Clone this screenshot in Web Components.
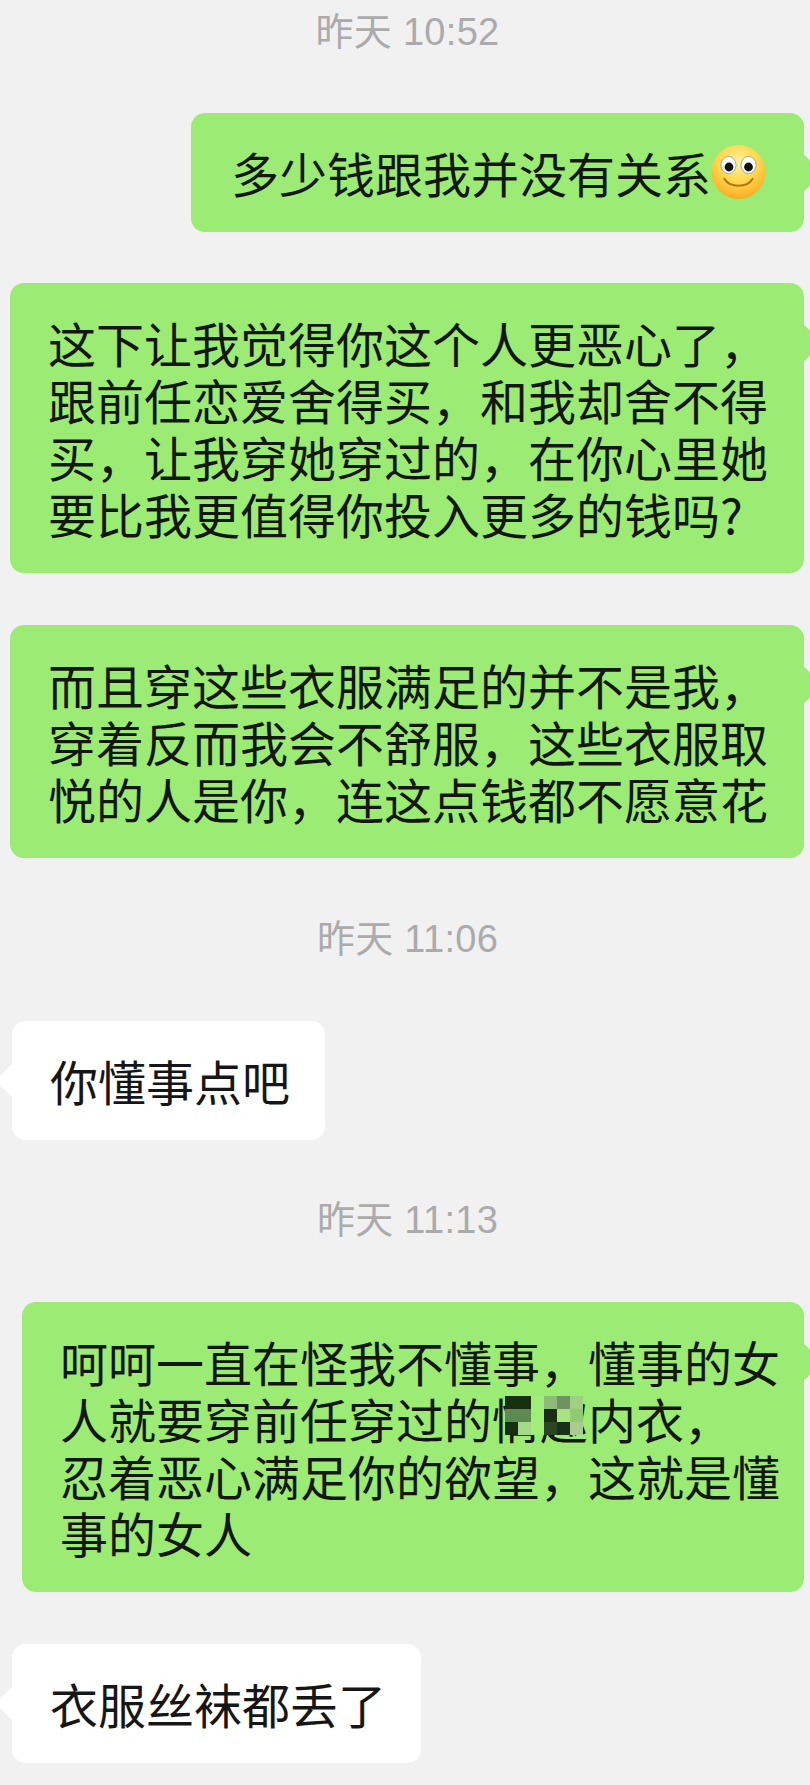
<!DOCTYPE html>
<html lang="zh-CN">
<head>
<meta charset="utf-8">
<title>聊天记录</title>
<style>
html,body{margin:0;padding:0;height:1785px;overflow:hidden;background:#f0f0f0}
body{font-family:"Noto Sans CJK SC",sans-serif;color:#14170f}
</style>
</head>
<body>
<template id="t-thread">
<style>
:host{display:flex;flex-direction:column;width:810px;height:1785px;overflow:hidden;background:#f1f1f1;box-sizing:border-box;padding-top:4px}
</style>
<slot></slot>
</template>
<template id="t-time">
<style>
:host{display:block;height:56px;line-height:56px;margin-top:var(--mt,0);padding-left:5px;text-align:center;color:#ababab;font:400 38px/56px "Liberation Sans","Noto Sans CJK SC",sans-serif;letter-spacing:.3px}
</style>
<slot></slot>
</template>
<template id="t-bubble">
<style>
:host{display:block;position:relative;box-sizing:border-box;align-self:flex-start;margin-top:var(--mt,52px);margin-left:var(--ml,10px);
 padding:31px var(--pr,36px) 31px var(--pl,38px);border-radius:14px;font:400 48px/57px "Noto Sans CJK SC",sans-serif;color:#14170f;background:#9ceb74}
:host([from="them"]){background:#fff;color:#161616;margin-left:12px;padding-right:35px}
:host([from="me"]){width:var(--w,auto)}
.tail{position:absolute;top:47px;width:26px;height:26px;background:inherit;transform:rotate(45deg);border-radius:2px}
:host([from="me"]) .tail{right:-13px}
:host([from="them"]) .tail{left:-12px;width:23px;height:23px;top:48px}
.txt{position:relative;display:block}
</style>
<span class="tail"></span>
<span class="txt"><slot></slot></span>
</template>
<template id="t-emoji">
<style>
:host{display:inline-block;width:55px;height:57px;vertical-align:top}
svg{display:block;width:55px;height:57px}
</style>
<svg viewBox="0 0 55 57" aria-hidden="true">
<defs>
<radialGradient id="f" cx="50%" cy="32%" r="72%">
<stop offset="0" stop-color="#fff2a0"/><stop offset=".5" stop-color="#ffd84e"/><stop offset=".88" stop-color="#fbb22a"/><stop offset="1" stop-color="#ee9a1d"/>
</radialGradient>
</defs>
<ellipse cx="27.5" cy="28" rx="27" ry="27" fill="url(#f)"/>
<ellipse cx="17.5" cy="21" rx="7.6" ry="8.6" fill="#fff" stroke="#a9a49a" stroke-width="1"/>
<ellipse cx="37.5" cy="21" rx="7.6" ry="8.6" fill="#fff" stroke="#a9a49a" stroke-width="1"/>
<circle cx="18" cy="23" r="4.4" fill="#111"/>
<circle cx="37.5" cy="23" r="4.4" fill="#111"/>
<path d="M13.5 35C19 44 36 44 41.5 35" fill="none" stroke="#b2750f" stroke-width="2.2" stroke-linecap="round"/>
</svg>
</template>
<template id="t-mosaic">
<style>
:host{display:inline-block;position:relative;white-space:nowrap}
.m{position:absolute;left:13px;top:6px;width:78px;height:39px;display:grid;grid-template-columns:repeat(6,13px);grid-template-rows:repeat(3,13px)}
.foot{position:absolute;left:48px;top:46px;width:42px;height:4px;background:#1a2b12;border-radius:2px;filter:blur(1px)}
i{display:block}
</style>
<slot></slot>
<div class="m" aria-hidden="true">
<i style="background:#16300f"></i><i style="background:#16300f"></i><i style="background:#9eee78"></i><i style="background:#8fbb7a"></i><i style="background:#6f925f"></i><i style="background:#a0cf82"></i>
<i style="background:#5d8a50"></i><i style="background:#5d8a50"></i><i style="background:#9eee78"></i><i style="background:#1b2d14"></i><i style="background:#a9e281"></i><i style="background:#8fc970"></i>
<i style="background:#16300f"></i><i style="background:#a5d98a"></i><i style="background:#9eee78"></i><i style="background:#2b4522"></i><i style="background:#16301a"></i><i style="background:#aacb90"></i>
</div>
</template>

<chat-thread>
  <chat-time>昨天 10:52</chat-time>
  <chat-bubble from="me" style="--mt:53px;--ml:191px;--pl:40px;--pr:38px">多少钱跟我并没有关系<smile-emoji></smile-emoji></chat-bubble>
  <chat-bubble from="me" style="--mt:51px;--w:794px">这下让我觉得你这个人更恶心了，跟前任恋爱舍得买，和我却舍不得买，让我穿她穿过的，在你心里她要比我更值得你投入更多的钱吗?</chat-bubble>
  <chat-bubble from="me" style="--w:794px">而且穿这些衣服满足的并不是我，穿着反而我会不舒服，这些衣服取悦的人是你，连这点钱都不愿意花</chat-bubble>
  <chat-time style="--mt:53px">昨天 11:06</chat-time>
  <chat-bubble from="them" style="--mt:54px">你懂事点吧</chat-bubble>
  <chat-time style="--mt:52px">昨天 11:13</chat-time>
  <chat-bubble from="me" style="--mt:54px;--ml:22px;--w:782px;--pr:24px">呵呵一直在怪我不懂事，懂事的女人就要穿前任穿过的<mosaic-patch>情趣</mosaic-patch>内衣，忍着恶心满足你的欲望，这就是懂事的女人</chat-bubble>
  <chat-bubble from="them" style="--mt:52px">衣服丝袜都丢了</chat-bubble>
</chat-thread>

<script>
function def(name,tpl){
  customElements.define(name,class extends HTMLElement{
    constructor(){super();this.attachShadow({mode:'open'}).appendChild(document.getElementById(tpl).content.cloneNode(true));}
  });
}
def('chat-thread','t-thread');
def('chat-time','t-time');
def('chat-bubble','t-bubble');
def('smile-emoji','t-emoji');
def('mosaic-patch','t-mosaic');
</script>
</body>
</html>
